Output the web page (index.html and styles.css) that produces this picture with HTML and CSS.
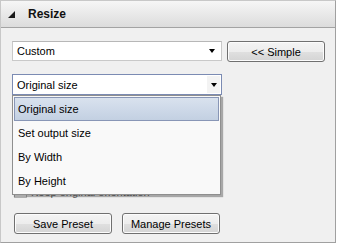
FILE: index.html
```html
<!DOCTYPE html>
<html lang="en">
<head>
    <meta charset="UTF-8">
    <title>Resize</title>
    <link rel="stylesheet" href="styles.css">
</head>
<body>
    <div class="panel">
        <div class="panel-head">
            <span class="caret"></span>
            <span class="title">Resize</span>
        </div>

        <div class="panel-body">
            <div class="row">
                <div class="combo">
                    <span>Custom</span>
                    <span class="arrow"></span>
                </div>
                <button class="btn btn-simple">&lt;&lt; Simple</button>
            </div>

            <div class="combo-wrap">
                <div class="combo focus">
                    <span>Original size</span>
                    <span class="arrow-box"><span class="arrow"></span></span>
                </div>

                <!-- open list of the size combo -->
                <ul class="dropdown">
                    <li class="selected">Original size</li>
                    <li>Set output size</li>
                    <li>By Width</li>
                    <li>By Height</li>
                </ul>
            </div>

            <label class="check">
                <span class="box"></span>
                Keep original orientation
            </label>

            <div class="row buttons">
                <button class="btn btn-save">Save Preset</button>
                <button class="btn btn-manage">Manage Presets</button>
            </div>
        </div>
    </div>
</body>
</html>
```

FILE: styles.css
```css
body {
    margin: 0;
    font-family: 'Liberation Sans', Arial, sans-serif;
    font-size: 11px;
    color: #000;
    background-color: #fff;
}

.panel {
    width: 334px;
    height: 241px;
    border: 1px solid #a0a0a0;
    border-top-color: #c8c8c8;
    border-left-color: #c8c8c8;
    background-color: #f0f0f0;
}

.panel-head {
    display: flex;
    align-items: center;
    height: 26px;
    border-bottom: 1px solid #a3a3a3;
    background: linear-gradient(#f6f6f6, #dcdcdc);
}

.caret {
    width: 0;
    height: 0;
    margin-left: 7px;
    margin-top: 1px;
    border-left: 7px solid transparent;
    border-bottom: 7px solid #1a1a1a;
}

.title {
    margin-left: 13px;
    font-size: 12px;
    font-weight: bold;
    color: #111;
}

.panel-body {
    padding: 13px 0 0 11px;
}

.row {
    display: flex;
    align-items: flex-start;
}

.combo {
    display: flex;
    align-items: center;
    justify-content: space-between;
    box-sizing: border-box;
    width: 210px;
    height: 20px;
    padding: 0 4px 0 4px;
    border: 1px solid #c9c9c9;
    border-top-color: #b7b7b7;
    background-color: #fff;
}

.combo.focus {
    height: 21px;
    padding-right: 1px;
    border-color: #7b8bb3;
}

.arrow {
    width: 0;
    height: 0;
    border-left: 3.5px solid transparent;
    border-right: 3.5px solid transparent;
    border-top: 4px solid #000;
    margin-right: 2px;
}

.arrow-box {
    display: flex;
    align-items: center;
    justify-content: center;
    width: 13px;
    height: 17px;
    background-color: #f3f3f3;
}

.arrow-box .arrow {
    margin-right: 0;
}

.btn {
    box-sizing: border-box;
    height: 21px;
    padding: 0;
    font-family: 'Liberation Sans', Arial, sans-serif;
    font-size: 11px;
    color: #000;
    border: 1px solid #707070;
    border-radius: 3px;
    background: linear-gradient(#f4f4f4 0%, #ededed 50%, #e0e0e0 51%, #d4d4d4 100%);
    box-shadow: inset 0 0 0 1px #fcfcfc;
}

.btn-simple {
    width: 98px;
    margin-left: 5px;
}

.combo-wrap {
    position: relative;
    margin-top: 12px;
}

.dropdown {
    position: absolute;
    top: 21px;
    left: 0;
    z-index: 2;
    box-sizing: border-box;
    width: 209px;
    margin: 0;
    padding: 1px;
    list-style: none;
    border: 1px solid #8f8f8f;
    background-color: #f9f9f9;
    box-shadow: 2px 2px 1px rgba(0, 0, 0, 0.3);
}

.dropdown li {
    box-sizing: border-box;
    height: 24px;
    line-height: 24px;
    padding-left: 4px;
}

.dropdown li.selected {
    border: 1px solid #8896b6;
    line-height: 22px;
    padding-left: 3px;
    background: linear-gradient(#d9e2ee, #c3d0e2);
}

.check {
    display: flex;
    align-items: center;
    margin-top: 90px;
    margin-left: 2px;
    color: #666;
}

.check .box {
    box-sizing: border-box;
    width: 13px;
    height: 13px;
    margin-right: 4px;
    border: 1px solid #b8b8b8;
    background-color: #f6f6f6;
}

.buttons {
    margin-top: 15px;
    margin-left: 2px;
}

.btn-save {
    width: 98px;
}

.btn-manage {
    width: 98px;
    margin-left: 10px;
}
```
